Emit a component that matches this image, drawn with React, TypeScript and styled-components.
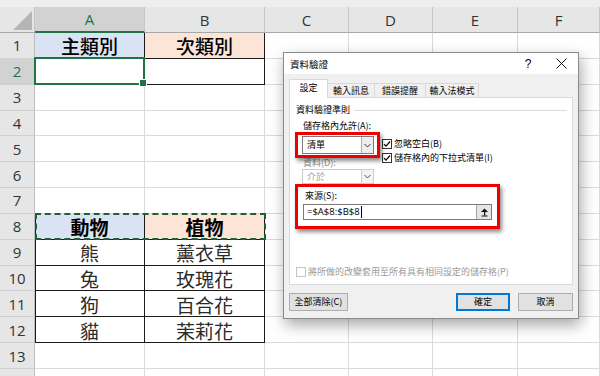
import React from "react";
import styled, { createGlobalStyle } from "styled-components";

const GlobalStyle = createGlobalStyle`
  html, body {
    margin: 0;
    padding: 0;
    background: #ffffff;
    overflow: hidden;
  }
  * { box-sizing: border-box; }
`;

const GREEN = "#217346";
const CJK = `"Noto Sans CJK TC", "Noto Sans", sans-serif`;

const Sheet = styled.div`
  position: relative;
  width: 600px;
  height: 376px;
  overflow: hidden;
  background: #ffffff;
  font-family: ${CJK};
`;

const TopStrip = styled.div`
  height: 7px;
  background: #eeeeee;
`;

const Grid = styled.div`
  display: grid;
  grid-template-columns: 35px 110px 120px 84px 84px 85px 82px;
  grid-template-rows: 26px repeat(14, 25.85px);
`;

const Corner = styled.div`
  background: #e6e6e6;
  border-right: 1px solid #c6c6c6;
  border-bottom: 1px solid #a8a8a8;
  display: flex;
  align-items: flex-end;
  justify-content: flex-end;
  padding: 0 2px 2px 0;
`;

const ColHead = styled.div<{ $active?: boolean }>`
  background: ${(p) => (p.$active ? "#d2d2d2" : "#e6e6e6")};
  color: ${(p) => (p.$active ? GREEN : "#333")};
  border-right: 1px solid #c6c6c6;
  border-bottom: ${(p) => (p.$active ? `2px solid ${GREEN}` : "1px solid #a8a8a8")};
  display: flex;
  align-items: center;
  justify-content: center;
  font-family: "Open Sans", "Liberation Sans", sans-serif;
  font-size: 15px;
`;

const RowHead = styled.div<{ $active?: boolean }>`
  background: ${(p) => (p.$active ? "#d2d2d2" : "#e6e6e6")};
  color: ${(p) => (p.$active ? GREEN : "#333")};
  border-right: 1px solid #bdbdbd;
  border-bottom: 1px solid #d0d0d0;
  display: flex;
  align-items: center;
  justify-content: center;
  font-family: "Open Sans", "Liberation Sans", sans-serif;
  font-size: 15px;
`;

const Cell = styled.div<{ $bg?: string; $weight?: number; $boxed?: boolean; $edge?: boolean }>`
  position: relative;
  background: ${(p) => p.$bg || "#ffffff"};
  border-right: 1px solid ${(p) => (p.$boxed ? "#1a1a1a" : "#dadada")};
  border-bottom: 1px solid ${(p) => (p.$boxed ? "#1a1a1a" : "#dadada")};
  box-shadow: ${(p) => (p.$edge ? "inset 1px 0 0 #1a1a1a" : "none")};
  display: flex;
  align-items: center;
  justify-content: center;
  font-size: 19px;
  line-height: 1;
  font-weight: ${(p) => p.$weight ?? 400};
  color: ${(p) => (p.$weight ? "#000" : "#2a2a2a")};
  padding-top: 1px;
`;

const Selection = styled.div`
  position: absolute;
  left: -1px;
  top: -2px;
  right: -1px;
  bottom: -1px;
  border: 2px solid ${GREEN};
  z-index: 2;
  &::after {
    content: "";
    position: absolute;
    right: -4px;
    bottom: -4px;
    width: 6px;
    height: 6px;
    background: ${GREEN};
    border: 1px solid #fff;
  }
`;

const Marquee = styled.div`
  position: absolute;
  left: 0;
  top: -1px;
  width: 231px;
  bottom: -1px;
  border: 2px dashed #1f5f34;
  z-index: 2;
`;

/* ---------- dialog ---------- */

const Dialog = styled.div`
  position: absolute;
  left: 283px;
  top: 52px;
  width: 296px;
  height: 267px;
  background: #f0f0f0;
  border: 1px solid #8a8a8a;
  box-shadow: 2px 6px 14px rgba(0, 0, 0, 0.35);
  display: flex;
  flex-direction: column;
  font-family: ${CJK};
  font-size: 9px;
  line-height: 12px;
  color: #000;
  z-index: 5;
`;

const TitleBar = styled.div`
  height: 21px;
  background: #ffffff;
  display: flex;
  align-items: center;
  padding-left: 6px;
`;

const Title = styled.div`
  flex: 1;
  font-size: 9.5px;
`;

const HelpBtn = styled.div`
  width: 20px;
  text-align: center;
  font-family: "Liberation Sans", sans-serif;
  font-size: 12px;
  margin-right: 8px;
`;

const CloseBtn = styled.div`
  width: 30px;
  height: 21px;
  display: flex;
  align-items: center;
  justify-content: center;
  margin-right: 2px;
`;

const Body = styled.div`
  flex: 1;
  display: flex;
  flex-direction: column;
  padding: 7px 5px 6px 5px;
`;

const TabRow = styled.div`
  display: flex;
  align-items: flex-end;
  height: 17px;
  margin-bottom: -1px;
  position: relative;
  z-index: 1;
`;

const Tab = styled.div<{ $w: number; $active?: boolean }>`
  width: ${(p) => p.$w}px;
  height: ${(p) => (p.$active ? 19 : 15)}px;
  background: ${(p) => (p.$active ? "#ffffff" : "#f0f0f0")};
  border: 1px solid #d9d9d9;
  border-bottom: ${(p) => (p.$active ? "none" : "1px solid #d9d9d9")};
  margin-right: -1px;
  display: flex;
  align-items: center;
  justify-content: center;
  padding-bottom: ${(p) => (p.$active ? 2 : 0)}px;
`;

const Panel = styled.div`
  height: 188px;
  background: #ffffff;
  border: 1px solid #d9d9d9;
  padding: 6px 5px 6px 6px;
  display: flex;
  flex-direction: column;
`;

const GroupHead = styled.div`
  display: flex;
  align-items: center;
  gap: 4px;
  &::after {
    content: "";
    flex: 1;
    height: 1px;
    background: #dcdcdc;
  }
`;

const Label = styled.div<{ $muted?: boolean; $mt?: number }>`
  padding-left: 7px;
  margin-top: ${(p) => p.$mt ?? 0}px;
  color: ${(p) => (p.$muted ? "#8d8d8d" : "#000")};
`;

const Section = styled.div`
  display: flex;
  align-items: flex-start;
`;

const LeftCol = styled.div`
  display: flex;
  flex-direction: column;
`;

const CheckCol = styled.div`
  display: flex;
  flex-direction: column;
  gap: 2px;
  margin: 6px 0 0 2px;
`;

const RedBox = styled.div<{ $w: number }>`
  width: ${(p) => p.$w}px;
  margin-left: -1px;
  border: 3px solid #ee0000;
  box-shadow: 2px 3px 4px rgba(0, 0, 0, 0.45);
  position: relative;
  z-index: 1;
`;

const Box1 = styled(RedBox)`
  padding: 1px 3px 1px 4px;
`;

const Box2 = styled(RedBox)`
  padding: 3px 5px 6px 0;
  display: flex;
  flex-direction: column;
  gap: 2px;
`;

const Select = styled.div<{ $disabled?: boolean }>`
  width: 72px;
  height: ${(p) => (p.$disabled ? 15 : 18)}px;
  margin-left: ${(p) => (p.$disabled ? 6 : 0)}px;
  border: 1px solid ${(p) => (p.$disabled ? "#cccccc" : "#7a7a7a")};
  background: #ffffff;
  display: flex;
  align-items: stretch;
  color: ${(p) => (p.$disabled ? "#a0a0a0" : "#000")};
`;

const SelectText = styled.div`
  flex: 1;
  display: flex;
  align-items: center;
  padding-left: 4px;
`;

const SelectArrow = styled.div<{ $disabled?: boolean }>`
  width: 12px;
  border-left: 1px solid ${(p) => (p.$disabled ? "#cccccc" : "#adadad")};
  background: ${(p) => (p.$disabled ? "#f4f4f4" : "#eeeeee")};
  display: flex;
  align-items: center;
  justify-content: center;
`;

const CheckRow = styled.div<{ $disabled?: boolean }>`
  display: flex;
  align-items: center;
  gap: 2px;
  color: ${(p) => (p.$disabled ? "#9a9a9a" : "#000")};
`;

const CheckBox = styled.div<{ $disabled?: boolean }>`
  width: 10px;
  height: 10px;
  border: 1px solid ${(p) => (p.$disabled ? "#c4c4c4" : "#333333")};
  background: #ffffff;
  display: flex;
  align-items: center;
  justify-content: center;
`;

const Input = styled.div`
  margin-left: 5px;
  height: 16px;
  border: 1px solid #7a7a7a;
  background: #ffffff;
  display: flex;
  align-items: stretch;
`;

const InputText = styled.div`
  flex: 1;
  display: flex;
  align-items: center;
  padding-left: 3px;
  font-family: "Open Sans", "Liberation Sans", sans-serif;
  font-size: 9.5px;
  &::after {
    content: "";
    width: 1px;
    height: 12px;
    margin-left: 1px;
    background: #000;
  }
`;

const CollapseBtn = styled.div`
  width: 15px;
  border-left: 1px solid #a0a0a0;
  background: #e6e6e6;
  display: flex;
  align-items: center;
  justify-content: center;
`;

const Footer = styled.div`
  display: flex;
  align-items: center;
  margin-top: 8px;
  gap: 8px;
`;

const Button = styled.div<{ $w: number; $primary?: boolean }>`
  width: ${(p) => p.$w}px;
  height: 18px;
  background: #e1e1e1;
  border: ${(p) => (p.$primary ? "2px solid #0078d7" : "1px solid #adadad")};
  display: flex;
  align-items: center;
  justify-content: center;
`;

const Spacer = styled.div`
  flex: 1;
`;

const Check = () => (
  <svg width="8" height="8" viewBox="0 0 8 8">
    <path d="M1 4.2 L3 6.2 L7 1.5" fill="none" stroke="#000" strokeWidth="1.2" />
  </svg>
);

const Chevron = ({ color }: { color: string }) => (
  <svg width="7" height="5" viewBox="0 0 7 5">
    <path d="M0.5 1 L3.5 4 L6.5 1" fill="none" stroke={color} strokeWidth="1" />
  </svg>
);

const columns = ["A", "B", "C", "D", "E", "F"];

type Row = { a?: string; b?: string; weight?: number; boxed?: boolean };

const rows: Record<number, Row> = {
  1: { a: "主類別", b: "次類別", weight: 500, boxed: true },
  2: { boxed: true },
  8: { a: "動物", b: "植物", weight: 700, boxed: true },
  9: { a: "熊", b: "薰衣草", boxed: true },
  10: { a: "兔", b: "玫瑰花", boxed: true },
  11: { a: "狗", b: "百合花", boxed: true },
  12: { a: "貓", b: "茉莉花", boxed: true },
};

export default function App() {
  const body: React.ReactNode[] = [];
  for (let r = 1; r <= 14; r++) {
    const row = rows[r] || {};
    const tinted = row.weight !== undefined;
    body.push(
      <RowHead key={`h${r}`} $active={r === 2}>
        {r <= 13 ? r : ""}
      </RowHead>
    );
    body.push(
      <Cell key={`a${r}`} $bg={tinted ? "#dae3f3" : undefined} $weight={row.weight} $boxed={row.boxed} $edge={row.boxed && r > 2}>
        {row.a}
        {r === 2 && <Selection />}
        {r === 8 && <Marquee />}
      </Cell>
    );
    body.push(
      <Cell key={`b${r}`} $bg={tinted ? "#fce4d6" : undefined} $weight={row.weight} $boxed={row.boxed}>
        {row.b}
      </Cell>
    );
    for (let c = 3; c <= 6; c++) body.push(<Cell key={`c${r}-${c}`} />);
  }

  return (
    <Sheet>
      <GlobalStyle />
      <TopStrip />
      <Grid>
        <Corner>
          <svg width="19" height="19" viewBox="0 0 19 19">
            <polygon points="0,19 19,19 19,0" fill="#b5b5b5" />
          </svg>
        </Corner>
        {columns.map((c) => (
          <ColHead key={c} $active={c === "A"}>
            {c}
          </ColHead>
        ))}
        {body}
      </Grid>

      <Dialog>
        <TitleBar>
          <Title>資料驗證</Title>
          <HelpBtn>?</HelpBtn>
          <CloseBtn>
            <svg width="11" height="11" viewBox="0 0 11 11">
              <path d="M0.5 0.5 L10.5 10.5 M10.5 0.5 L0.5 10.5" stroke="#111" strokeWidth="1" />
            </svg>
          </CloseBtn>
        </TitleBar>
        <Body>
          <TabRow>
            <Tab $w={39} $active>設定</Tab>
            <Tab $w={48}>輸入訊息</Tab>
            <Tab $w={52}>錯誤提醒</Tab>
            <Tab $w={54}>輸入法模式</Tab>
          </TabRow>
          <Panel>
            <GroupHead>資料驗證準則</GroupHead>
            <Label $mt={4}>儲存格內允許(A):</Label>
            <Section>
              <LeftCol>
                <Box1 $w={85}>
                  <Select>
                    <SelectText>清單</SelectText>
                    <SelectArrow>
                      <Chevron color="#333" />
                    </SelectArrow>
                  </Select>
                </Box1>
                <Label $muted $mt={-1}>資料(D):</Label>
                <Select $disabled>
                  <SelectText>介於</SelectText>
                  <SelectArrow $disabled>
                    <Chevron color="#555" />
                  </SelectArrow>
                </Select>
              </LeftCol>
              <CheckCol>
                <CheckRow>
                  <CheckBox>
                    <Check />
                  </CheckBox>
                  忽略空白(B)
                </CheckRow>
                <CheckRow>
                  <CheckBox>
                    <Check />
                  </CheckBox>
                  儲存格內的下拉式清單(I)
                </CheckRow>
              </CheckCol>
            </Section>
            <Box2 $w={205}>
              <Label>來源(S):</Label>
              <Input>
                <InputText>=$A$8:$B$8</InputText>
                <CollapseBtn>
                  <svg width="9" height="9" viewBox="0 0 9 9">
                    <polygon points="4.5,0.5 8,4 1,4" fill="#111" />
                    <rect x="4" y="4" width="1.2" height="3.5" fill="#111" />
                    <rect x="1.5" y="7.5" width="6" height="1" fill="#111" />
                  </svg>
                </CollapseBtn>
              </Input>
            </Box2>
            <Spacer />
            <CheckRow $disabled>
              <CheckBox $disabled />
              將所做的改變套用至所有具有相同設定的儲存格(P)
            </CheckRow>
          </Panel>
          <Footer>
            <Button $w={59}>全部清除(C)</Button>
            <Spacer />
            <Button $w={54} $primary>確定</Button>
            <Button $w={55}>取消</Button>
          </Footer>
        </Body>
      </Dialog>
    </Sheet>
  );
}
